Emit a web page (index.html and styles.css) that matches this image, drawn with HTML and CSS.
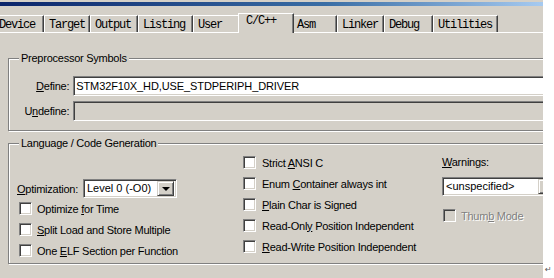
FILE: index.html
```html
<!DOCTYPE html>
<html>
<head>
<meta charset="utf-8">
<link rel="stylesheet" href="styles.css">
</head>
<body>
<div class="screen">
  <div class="dialog">
    <div class="titlebar"></div>
    <div class="tabs">
      <div class="tab t-device">Device</div>
      <div class="tab t-target">Target</div>
      <div class="tab t-output">Output</div>
      <div class="tab t-listing">Listing</div>
      <div class="tab t-user">User</div>
      <div class="tab t-cc active">C/C++</div>
      <div class="tab t-asm">Asm</div>
      <div class="tab t-linker">Linker</div>
      <div class="tab t-debug">Debug</div>
      <div class="tab t-util">Utilities</div>
    </div>
    <div class="page">
      <div class="group pre">
        <div class="gtitle">Preprocessor Symbols</div>
        <div class="frow first">
          <span class="flabel"><u>D</u>efine:</span>
          <div class="edit">STM32F10X_HD,USE_STDPERIPH_DRIVER</div>
        </div>
        <div class="frow">
          <span class="flabel">U<u>n</u>define:</span>
          <div class="edit disabled"></div>
        </div>
      </div>
      <div class="group lang">
        <div class="gtitle">Language / Code Generation</div>
        <div class="cols">
          <div class="col c1">
            <div class="optrow">
              <span class="olabel"><u>O</u>ptimization:</span>
              <div class="combo opt"><span class="ctext">Level 0 (-O0)</span><span class="cbtn"><i class="tri"></i></span></div>
            </div>
            <div class="chk"><span class="box"></span><span>Optimize <u>f</u>or Time</span></div>
            <div class="chk"><span class="box"></span><span><u>S</u>plit Load and Store Multiple</span></div>
            <div class="chk"><span class="box"></span><span>One <u>E</u>LF Section per Function</span></div>
          </div>
          <div class="col c2">
            <div class="chk"><span class="box"></span><span>Strict <u>A</u>NSI C</span></div>
            <div class="chk"><span class="box"></span><span>Enum <u>C</u>ontainer always int</span></div>
            <div class="chk"><span class="box"></span><span><u>P</u>lain Char is Signed</span></div>
            <div class="chk"><span class="box"></span><span>Read-Onl<u>y</u> Position Independent</span></div>
            <div class="chk"><span class="box"></span><span><u>R</u>ead-Write Position Independent</span></div>
          </div>
          <div class="col c3">
            <div class="wlabel"><u>W</u>arnings:</div>
            <div class="combo warn"><span class="ctext">&lt;unspecified&gt;</span><span class="cbtn"><i class="tri"></i></span></div>
            <div class="chk off"><span class="box"></span><span>Thum<u>b</u> Mode</span></div>
          </div>
        </div>
      </div>
    </div>
  </div>
  <div class="margin"><span class="ret">↵</span></div>
</div>
</body>
</html>
```
FILE: styles.css
```css
* { box-sizing: border-box; }
html, body { margin: 0; padding: 0; background: #fff; }
body { width: 554px; height: 278px; overflow: hidden; }

.screen { display: flex; width: 554px; height: 278px; }

.dialog {
  width: 543px;
  height: 278px;
  background: #d4d0c8;
  overflow: hidden;
  font-family: "Liberation Sans", Arial, sans-serif;
  font-size: 11px;
  letter-spacing: -0.25px;
  color: #000;
  flex: none;
}

.margin {
  flex: 1;
  display: flex;
  align-items: flex-end;
  padding: 0 0 4px 2px;
}
.ret { font-family: "DejaVu Sans", sans-serif; font-size: 8px; color: #555; line-height: 8px; }

.titlebar {
  margin-top: 2px;
  height: 4px;
  background: linear-gradient(to right, #0a246a, #3a6ea5 60%, #a6caf0);
}

.tabs {
  display: flex;
  align-items: flex-end;
  height: 19px;
  margin-top: 7px;
  margin-left: -6px;
  font-family: "Liberation Mono", "Courier New", monospace;
  font-size: 12px;
  letter-spacing: -1.2px;
  position: relative;
  z-index: 1;
}
.tab {
  height: 17px;
  border-top: 1px solid #fff;
  border-left: 1px solid #fff;
  border-right: 1px solid #404040;
  box-shadow: inset -1px 0 0 #808080;
  padding: 3px 0 0 4px;
  line-height: 13px;
  flex: none;
  white-space: nowrap;
}
.t-device { width: 50px; }
.t-target { width: 46px; }
.t-output { width: 48px; }
.t-listing { width: 55px; }
.t-user { width: 47px; }
.t-cc { width: 52px; }
.t-asm { width: 45px; }
.t-linker { width: 47px; }
.t-debug { width: 49px; }
.t-util { width: 65px; }
.tab.active {
  height: 20px;
  margin: 0 -2px -1px -2px;
  width: 56px;
  padding: 1px 0 0 7px;
  background: #d4d0c8;
  position: relative;
  z-index: 2;
}

.page {
  border-top: 1px solid #fff;
  padding: 25px 0 0 8px;
}

.group {
  width: 560px;
  border: 1px solid #808080;
  box-shadow: inset 1px 1px 0 #fff, 1px 1px 0 #fff;
}
.gtitle {
  display: table;
  margin: -7px 0 0 10px;
  padding: 0 2px;
  line-height: 13px;
  height: 13px;
  background: #d4d0c8;
}

.pre { height: 73px; }
.frow { display: flex; align-items: center; margin-top: 5px; }
.frow.first { margin-top: 11px; }
.flabel { width: 61px; text-align: right; margin-right: 4px; }

.edit, .combo {
  height: 20px;
  border-top: 1px solid #808080;
  border-left: 1px solid #808080;
  border-bottom: 1px solid #fff;
  border-right: 1px solid #fff;
  box-shadow: inset 1px 1px 0 #404040, inset -1px -1px 0 #d4d0c8;
  background: #fff;
}
.edit {
  width: 500px;
  padding: 3px 0 0 2px;
  line-height: 13px;
  font-size: 11px;
  letter-spacing: -0.1px;
}
.edit.disabled { background: #d4d0c8; }

.lang { height: 121px; margin-top: 12px; }
.cols {
  display: grid;
  grid-template-columns: 226px 199px 1fr;
  padding-left: 8px;
  margin-top: 2px;
}
.col { display: flex; flex-direction: column; }

.optrow { display: flex; align-items: center; margin-top: 27px; height: 19px; }
.olabel { width: 66px; }
.combo { display: flex; position: relative; height: 19px; }
.combo.opt { width: 94px; }
.combo.warn { width: 116px; margin-top: 4px; }
.ctext { padding: 2px 0 0 3px; line-height: 13px; font-size: 11px; letter-spacing: 0; flex: 1; white-space: nowrap; }
.cbtn {
  width: 17px;
  height: 15px;
  margin: 1px 2px 0 0;
  background: #d4d0c8;
  border-top: 1px solid #d4d0c8;
  border-left: 1px solid #d4d0c8;
  border-right: 1px solid #404040;
  border-bottom: 1px solid #404040;
  box-shadow: inset 1px 1px 0 #fff, inset -1px -1px 0 #808080;
  display: flex;
  align-items: center;
  justify-content: center;
  flex: none;
}
.tri {
  width: 0; height: 0;
  border-left: 4px solid transparent;
  border-right: 4px solid transparent;
  border-top: 4px solid #000;
  margin-top: 1px;
}

.chk { display: flex; align-items: center; height: 21px; white-space: nowrap; }
.c1 .chk { padding-left: 2px; }
.box {
  width: 13px; height: 13px;
  flex: none;
  background: #fff;
  border-top: 1px solid #808080;
  border-left: 1px solid #808080;
  border-bottom: 1px solid #fff;
  border-right: 1px solid #fff;
  box-shadow: inset 1px 1px 0 #404040, inset -1px -1px 0 #d4d0c8;
  margin-right: 5px;
}
.c2 .box { margin-right: 6px; }
.chk.off { color: #808080; text-shadow: 1px 1px 0 #fff; margin-top: 9px; padding-left: 1px; }
.chk.off .box { background: #d4d0c8; }

.wlabel { height: 21px; line-height: 21px; }
```
